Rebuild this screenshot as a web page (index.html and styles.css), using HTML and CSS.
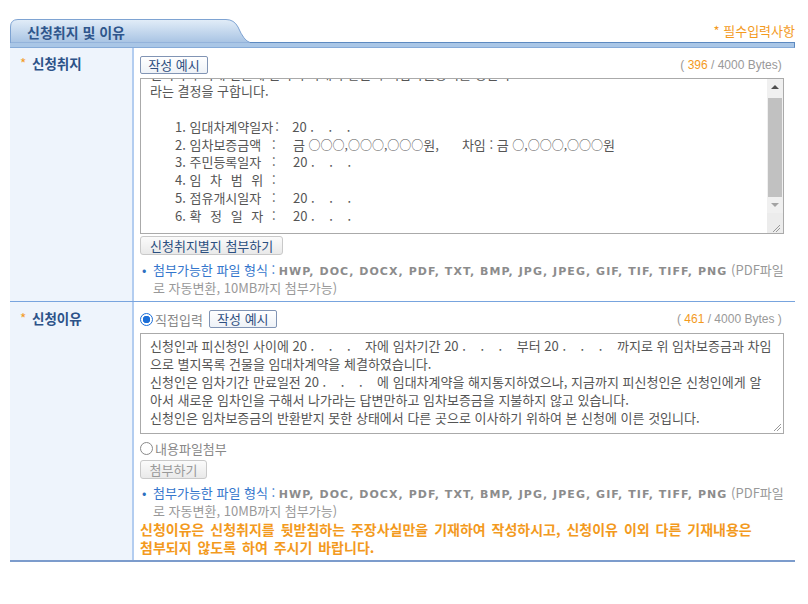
FILE: index.html
```html
<!DOCTYPE html>
<html lang="ko">
<head>
<meta charset="utf-8">
<title>신청취지 및 이유</title>
<link rel="stylesheet" href="styles.css">
</head>
<body>
<div class="wrap">
  <div class="head">
    <div class="tab">
      <svg class="tab-bg" width="240" height="24" viewBox="0 0 240 24">
        <defs>
          <linearGradient id="tg" x1="0" y1="0" x2="0" y2="1">
            <stop offset="0" stop-color="#e2edf8"/>
            <stop offset="1" stop-color="#a7c3e3"/>
          </linearGradient>
        </defs>
        <path d="M0.5 24 V8 Q0.5 0.5 8 0.5 H216 Q224 0.5 228 8 Q234 22 240 23.5 V24 Z" fill="url(#tg)" stroke="#7ea3d2" stroke-width="1"/>
      </svg>
      <span class="tab-title">신청취지 및 이유</span>
    </div>
    <div class="req">* 필수입력사항</div>
  </div>
  <div class="bar"></div>

  <div class="row row1">
    <div class="lab"><span class="star">*</span>신청취지</div>
    <div class="cell">
      <div class="tools">
        <button class="btn-ex">작성 예시</button>
        <span class="bytes">( <em>396</em> / 4000 Bytes)</span>
      </div>
      <div class="ta ta1">
        <div class="ta-text">
          <div class="line">별지목록 기재 건물에 관하여 아래와 같은 주택임차권등기를 명한다</div>
          <div class="line">라는 결정을 구합니다.</div>
          <div class="line">&nbsp;</div>
          <div class="line item"><span class="k k1">1. 임대차계약일자</span><span class="c c1">:</span><span class="v">20 .&nbsp;&nbsp;&nbsp;&nbsp;.&nbsp;&nbsp;&nbsp;&nbsp;.</span></div>
          <div class="line item"><span class="k">2. 임차보증금액</span><span class="c">:</span><span class="v">금 <span class="o">○○○,○○○,○○○</span>원,<span class="gap"></span>차임 : 금 <span class="o">○,○○○,○○○</span>원</span></div>
          <div class="line item"><span class="k">3. 주민등록일자</span><span class="c">:</span><span class="v">20 .&nbsp;&nbsp;&nbsp;&nbsp;.&nbsp;&nbsp;&nbsp;&nbsp;.</span></div>
          <div class="line item"><span class="k">4. <span class="sp">임 차 범 위</span></span><span class="c">:</span><span class="v"></span></div>
          <div class="line item"><span class="k">5. 점유개시일자</span><span class="c">:</span><span class="v">20 .&nbsp;&nbsp;&nbsp;&nbsp;.&nbsp;&nbsp;&nbsp;&nbsp;.</span></div>
          <div class="line item"><span class="k">6. <span class="sp">확 정 일 자</span></span><span class="c">:</span><span class="v">20 .&nbsp;&nbsp;&nbsp;&nbsp;.&nbsp;&nbsp;&nbsp;&nbsp;.</span></div>
        </div>
        <div class="sb">
          <div class="sb-up"><span class="tri-up"></span></div>
          <div class="sb-track"><div class="sb-thumb"></div></div>
          <div class="sb-down"><span class="tri-down"></span></div>
          <div class="sb-corner">
            <svg width="15" height="20" viewBox="0 0 15 20"><path d="M13 12 L6 19 M13 15 L9 19" stroke="#999" stroke-width="1"/></svg>
          </div>
        </div>
      </div>
      <button class="btn-gray">신청취지별지 첨부하기</button>
      <div class="note">
        <span class="dot">•</span><span class="nt">첨부가능한 파일 형식 :</span> <b>HWP, DOC, DOCX, PDF, TXT, BMP, JPG, JPEG, GIF, TIF, TIFF, PNG</b> (PDF파일<br>
        로 자동변환, 10MB까지 첨부가능)
      </div>
    </div>
  </div>

  <div class="row row2">
    <div class="lab"><span class="star">*</span>신청이유</div>
    <div class="cell">
      <div class="tools">
        <div class="radio-wrap">
          <span class="radio on"></span><span class="rl">직접입력</span>
          <button class="btn-ex">작성 예시</button>
        </div>
        <span class="bytes">( <em>461</em> / 4000 Bytes )</span>
      </div>
      <div class="ta ta2">
        <div class="ta-text">
          <div class="line">신청인과 피신청인 사이에 20 .&nbsp;&nbsp;&nbsp;&nbsp;.&nbsp;&nbsp;&nbsp;&nbsp;.&nbsp;&nbsp;&nbsp;&nbsp;자에 임차기간 20 .&nbsp;&nbsp;&nbsp;&nbsp;.&nbsp;&nbsp;&nbsp;&nbsp;.&nbsp;&nbsp;&nbsp;&nbsp;부터 20 .&nbsp;&nbsp;&nbsp;&nbsp;.&nbsp;&nbsp;&nbsp;&nbsp;.&nbsp;&nbsp;&nbsp;&nbsp;까지로 위 임차보증금과 차임</div>
          <div class="line">으로 별지목록 건물을 임대차계약을 체결하였습니다.</div>
          <div class="line">신청인은 임차기간 만료일전 20 .&nbsp;&nbsp;&nbsp;&nbsp;.&nbsp;&nbsp;&nbsp;&nbsp;.&nbsp;&nbsp;&nbsp;&nbsp;에 임대차계약을 해지통지하였으나, 지금까지 피신청인은 신청인에게 알</div>
          <div class="line">아서 새로운 임차인을 구해서 나가라는 답변만하고 임차보증금을 지불하지 않고 있습니다.</div>
          <div class="line">신청인은 임차보증금의 반환받지 못한 상태에서 다른 곳으로 이사하기 위하여 본 신청에 이른 것입니다.</div>
        </div>
        <svg class="grip" width="10" height="10" viewBox="0 0 10 10"><path d="M9 2 L2 9 M9 5 L5 9" stroke="#999" stroke-width="1"/></svg>
      </div>
      <div class="radio-wrap r2">
        <span class="radio"></span><span class="rl">내용파일첨부</span>
      </div>
      <button class="btn-gray dis">첨부하기</button>
      <div class="note">
        <span class="dot">•</span><span class="nt">첨부가능한 파일 형식 :</span> <b>HWP, DOC, DOCX, PDF, TXT, BMP, JPG, JPEG, GIF, TIF, TIFF, PNG</b> (PDF파일<br>
        로 자동변환, 10MB까지 첨부가능)
      </div>
      <div class="warn">신청이유은 신청취지를 뒷받침하는 주장사실만을 기재하여 작성하시고, 신청이유 이외 다른 기재내용은<br>첨부되지 않도록 하여 주시기 바랍니다.</div>
    </div>
  </div>
</div>
</body>
</html>
```

FILE: styles.css
```css
* { box-sizing: border-box; }
html, body { margin: 0; padding: 0; background: #fff; }
body {
  font-family: "Noto Sans CJK KR", "Noto Sans", sans-serif;
  font-size: 13px;
  color: #555;
}
.wrap { padding: 19px 13px 0 10px; }

.head {
  display: flex;
  justify-content: space-between;
  align-items: flex-end;
  height: 23px;
}
.tab { position: relative; width: 240px; height: 23px; }
.tab-bg { position: absolute; left: 0; top: 0; }
.tab-title {
  position: relative;
  display: block;
  padding-left: 17px;
  line-height: 27px;
  font-size: 14px;
  font-weight: bold;
  color: #2f568c;
}
.req { color: #f39a1e; font-size: 13px; line-height: 16px; padding-bottom: 3px; }

.bar {
  height: 6px;
  background: #a9c6e6;
  border-top: 1px solid #5c89c0;
  border-bottom: 1px solid #86abd8;
  border-right: 1px solid #5c89c0;
}

.row {
  display: grid;
  grid-template-columns: 124px 1fr;
}
.row1 { border-bottom: 1px solid #78a4de; }
.row2 { border-bottom: 2px solid #7c9ccc; }
.lab {
  background: #eef4fc;
  border-right: 2px solid #b3cdf0;
  padding: 6px 0 0 10px;
  font-size: 13.5px;
  font-weight: bold;
  color: #2c5288;
  line-height: 18px;
}
.row2 .lab { padding-top: 7px; }
.star { color: #f39a1e; font-weight: normal; display: inline-block; width: 12px; }
.cell { padding: 8px 15px 4px 6px; }

.tools {
  display: flex;
  justify-content: space-between;
  align-items: center;
  height: 18px;
}
.btn-ex {
  font-family: inherit;
  font-size: 13px;
  color: #2f4f7f;
  height: 18px;
  width: 68px;
  padding: 0;
  line-height: 16px;
  border: 1px solid #8194b4;
  border-radius: 2px;
  background: linear-gradient(#ffffff, #eef2f7);
}
.bytes {
  font-family: "Liberation Sans", Arial, sans-serif;
  font-size: 12px;
  color: #999;
  padding-right: 2px;
}
.bytes em { font-style: normal; color: #f39a1e; }

.ta {
  position: relative;
  border: 1px solid #aaa;
  display: flex;
  overflow: hidden;
  background: #fff;
}
.ta1 { margin-top: 4px; height: 156px; }
.ta2 { margin-top: 5px; height: 101px; }
.ta-text { flex: 1; padding: 0 9px; overflow: hidden; color: #555; white-space: nowrap; }
.ta1 .ta-text { margin-top: -14.5px; line-height: 17.8px; }
.ta2 .ta-text { padding-top: 3px; line-height: 18px; }
.item { padding-left: 25px; display: flex; }
.k { width: 97px; flex: none; }
.k1 { width: auto; }
.c { width: 21px; flex: none; }
.c1 { width: 19px; padding-left: 2px; }
.sp { word-spacing: 5px; }
.o { font-size: 12px; }
.gap { display: inline-block; width: 23px; }

.sb { width: 16px; background: #f0f0f0; display: flex; flex-direction: column; }
.sb-up, .sb-down { height: 17px; display: flex; align-items: center; justify-content: center; }
.tri-up { width: 0; height: 0; border-left: 4px solid transparent; border-right: 4px solid transparent; border-bottom: 4px solid #505050; }
.tri-down { width: 0; height: 0; border-left: 4px solid transparent; border-right: 4px solid transparent; border-top: 4px solid #a3a3a3; }
.sb-track { height: 102px; padding: 3px 1px 0 1px; }
.sb-thumb { height: 99px; background: #c1c1c1; }
.sb-corner { flex: 1; background: #ececec; display: flex; align-items: flex-end; }
.grip { position: absolute; right: 1px; bottom: 1px; }

.btn-gray {
  display: block;
  margin-top: 2px;
  font-family: inherit;
  font-size: 13px;
  color: #2b4f80;
  height: 19px;
  padding: 0 9px;
  line-height: 17px;
  border: 1px solid #c9c9c9;
  border-radius: 3px;
  background: linear-gradient(#fbfbfb, #e9e9e9);
}
.btn-gray.dis { color: #999; margin-top: 3px; width: 67px; padding: 0; }

.note { margin-top: 6px; line-height: 18px; color: #999; white-space: nowrap; padding-left: 13px; position: relative; }
.row2 .note { margin-top: 5px; }
.note .dot { position: absolute; left: 2px; top: 0; color: #2e6fc0; }
.nt { color: #3476cc; }
.note b {
  font-family: "DejaVu Sans", Verdana, sans-serif;
  font-size: 11px;
  line-height: 12px;
  letter-spacing: 1.05px;
  color: #8c8c8c;
  font-weight: bold;
}

.radio-wrap { display: flex; align-items: center; height: 18px; }
.radio {
  width: 13px; height: 13px; border-radius: 50%;
  border: 1px solid #8a8a8a; background: #fff; display: inline-block;
  margin-right: 2px; flex: none;
}
.radio.on {
  border: 1px solid #1c6fd8;
  background: radial-gradient(circle, #1c6fd8 0 3.5px, #fff 4px);
}
.rl { color: #888; margin-right: 6px; }
.r2 { margin-top: 5px; }

.warn {
  color: #f39a1e;
  font-weight: bold;
  font-size: 14px;
  word-spacing: 2px;
  line-height: 18px;
  white-space: nowrap;
}
```
